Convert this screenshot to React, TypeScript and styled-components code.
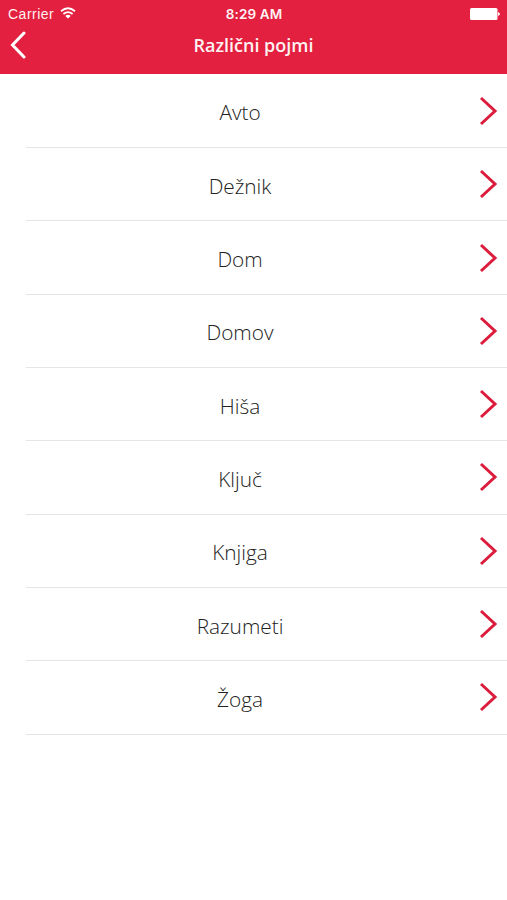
import React from 'react';
import styled, { createGlobalStyle } from 'styled-components';

const Global = createGlobalStyle`
  * { box-sizing: border-box; }
  body { margin: 0; background: #fff; }
`;
const Screen = styled.main`
  width: 507px; height: 900px; background: #fff; overflow: hidden;
  font-family: "Open Sans", sans-serif;
`;
const Header = styled.header`
  height: 74px; background: #e3203f; color: #fff;
`;
const StatusBar = styled.div`
  height: 28px; padding: 0 7px 0 8px; display: grid; align-items: center;
  grid-template-columns: 1fr auto 1fr;
  font: 14px/28px "Liberation Sans", sans-serif;
`;
const Carrier = styled.div`
  display: flex; align-items: center; gap: 6px; letter-spacing: 0.5px; color: #fff2f3;
`;
const Wifi = styled.svg`margin-top: -2px;`;
const Time = styled.div`font: 600 13.5px/28px Inter, sans-serif; letter-spacing: 0.15px; color: #fff2f3;`;
const Battery = styled.svg`justify-self: end; margin-top: -1px;`;
const NavBar = styled.div`
  height: 34px; display: grid; grid-template-columns: 30px 1fr 30px; align-items: center;
  padding: 0 8px;
`;
const Title = styled.h1`
  margin: 0; text-align: center; font-size: 18px; font-weight: 600; line-height: 34px; color: #fff2f3;
`;
const BackButton = styled.button`
  border: 0; padding: 0; background: none; color: inherit; display: flex;
`;
const List = styled.ul`list-style: none; margin: 0; padding: 0.7px 0 0 26px;`;
const Row = styled.li`
  height: 73.33px; border-bottom: 1px solid #e5e5e5; display: flex; align-items: center;
`;
const Label = styled.span`
  width: 428px; text-align: center; font-size: 20.8px; font-weight: 300; color: #222; padding-top: 3px;
`;
const Chevron = styled.svg`margin-left: 24px;`;

const terms = ['Avto', 'Dežnik', 'Dom', 'Domov', 'Hiša', 'Ključ', 'Knjiga', 'Razumeti', 'Žoga'];

export default function App() {
  return (
    <Screen>
      <Global />
      <Header>
        <StatusBar>
          <Carrier>Carrier
            <Wifi width="16" height="12" viewBox="0 0 16 12" fill="none" stroke="#fff" strokeWidth="1.8">
              <path d="M1 4.3Q8-1.7 15 4.3M3.4 7Q8 3.2 12.6 7" /><path d="M8 11.5L5.3 8.9Q8 6.8 10.7 8.9Z" fill="#fff" stroke="none" />
            </Wifi>
          </Carrier>
          <Time>8:29 AM</Time>
          <Battery width="30" height="12" viewBox="0 0 30 12" fill="#fff"><rect width="27.5" height="12" rx="1.5" /><path d="M28 4q4 2 0 4z" /></Battery>
        </StatusBar>
        <NavBar>
          <BackButton aria-label="Back"><svg width="20" height="28" viewBox="0 0 20 28" fill="none" stroke="#fff" strokeWidth="3" strokeLinecap="round"><path d="M16 2L4.5 14L16 26" /></svg></BackButton>
          <Title>Različni pojmi</Title>
        </NavBar>
      </Header>
      <List>
        {terms.map(term => (
          <Row key={term}><Label>{term}</Label><Chevron width="22" height="30" viewBox="0 0 22 30" fill="none" stroke="#dc1c3c" strokeWidth="3"><path d="M3 2L17 15L3 28" /></Chevron></Row>
        ))}
      </List>
    </Screen>
  );
}
